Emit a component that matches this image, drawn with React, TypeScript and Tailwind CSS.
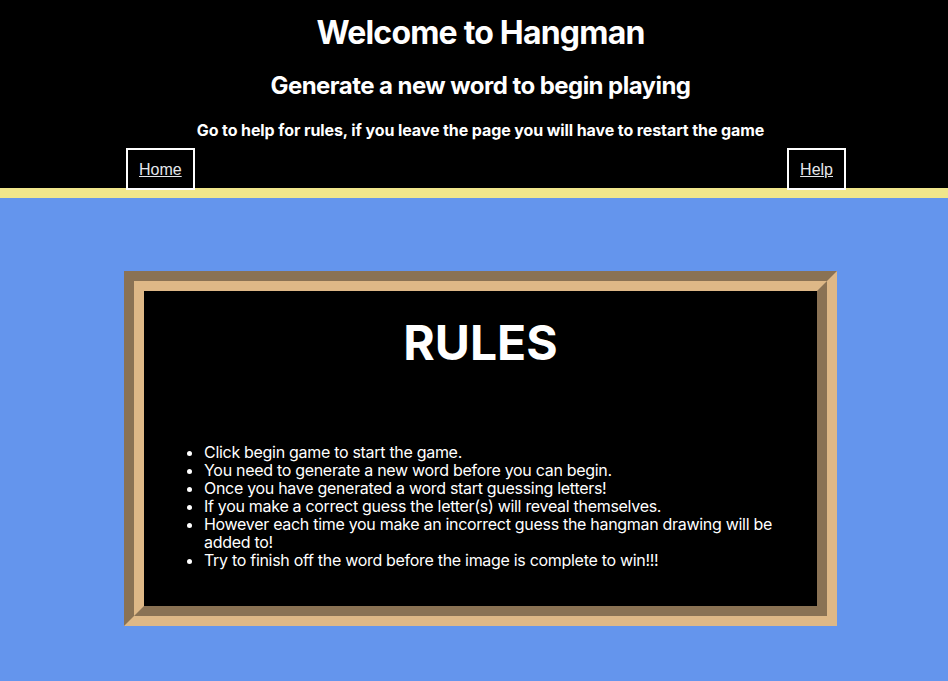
import React from "react";

const rules = [
  "Click begin game to start the game.",
  "You need to generate a new word before you can begin.",
  "Once you have generated a word start guessing letters!",
  "If you make a correct guess the letter(s) will reveal themselves.",
  "However each time you make an incorrect guess the hangman drawing will be added to!",
  "Try to finish off the word before the image is complete to win!!!",
];

const App: React.FC = () => {
  return (
    <div className="min-h-[681px] bg-[#6495ed] font-['Inter',sans-serif]">
      <header className="bg-black text-white">
        <div className="pl-[13px]">
          <h1 className="pt-[14px] text-center text-[32px] font-bold leading-[38px] tracking-[-0.8px]">
            Welcome to Hangman
          </h1>
          <h2 className="mt-[20px] text-center text-[24px] font-bold leading-[28px] tracking-[-0.55px]">
            Generate a new word to begin playing
          </h2>
          <h3 className="mt-[20px] text-center text-[16px] font-bold leading-[20px] tracking-[-0.1px]">
            Go to help for rules, if you leave the page you will have to restart the game
          </h3>
        </div>
        <nav className="mt-[8px] flex justify-between pl-[126px] pr-[102px] font-['Liberation_Sans',sans-serif]">
          <a href="#" className="block border-2 border-white px-[11px] pt-[10px] pb-[9px] text-[16px] leading-[19px] text-gray-200 underline">
            Home
          </a>
          <a href="#" className="block border-2 border-white px-[11px] pt-[10px] pb-[9px] text-[16px] leading-[19px] text-gray-200 underline">
            Help
          </a>
        </nav>
      </header>
      <div className="-mt-[2px] h-[10px] bg-[#f0e68c]" />
      <main className="pt-[73px]">
        <section className="ml-[124px] h-[355px] w-[713px] border-[20px] border-[#deb887] bg-black text-white [border-style:groove]">
          <h1 className="mt-[26px] text-center text-[48px] font-bold leading-[52px]">RULES</h1>
          <ul className="mt-[74px] list-disc pl-[60px] pr-[40px] text-[16px] leading-[18px] tracking-[-0.3px]">
            {rules.map((r) => (
              <li key={r}>{r}</li>
            ))}
          </ul>
        </section>
      </main>
    </div>
  );
};

export default App;
